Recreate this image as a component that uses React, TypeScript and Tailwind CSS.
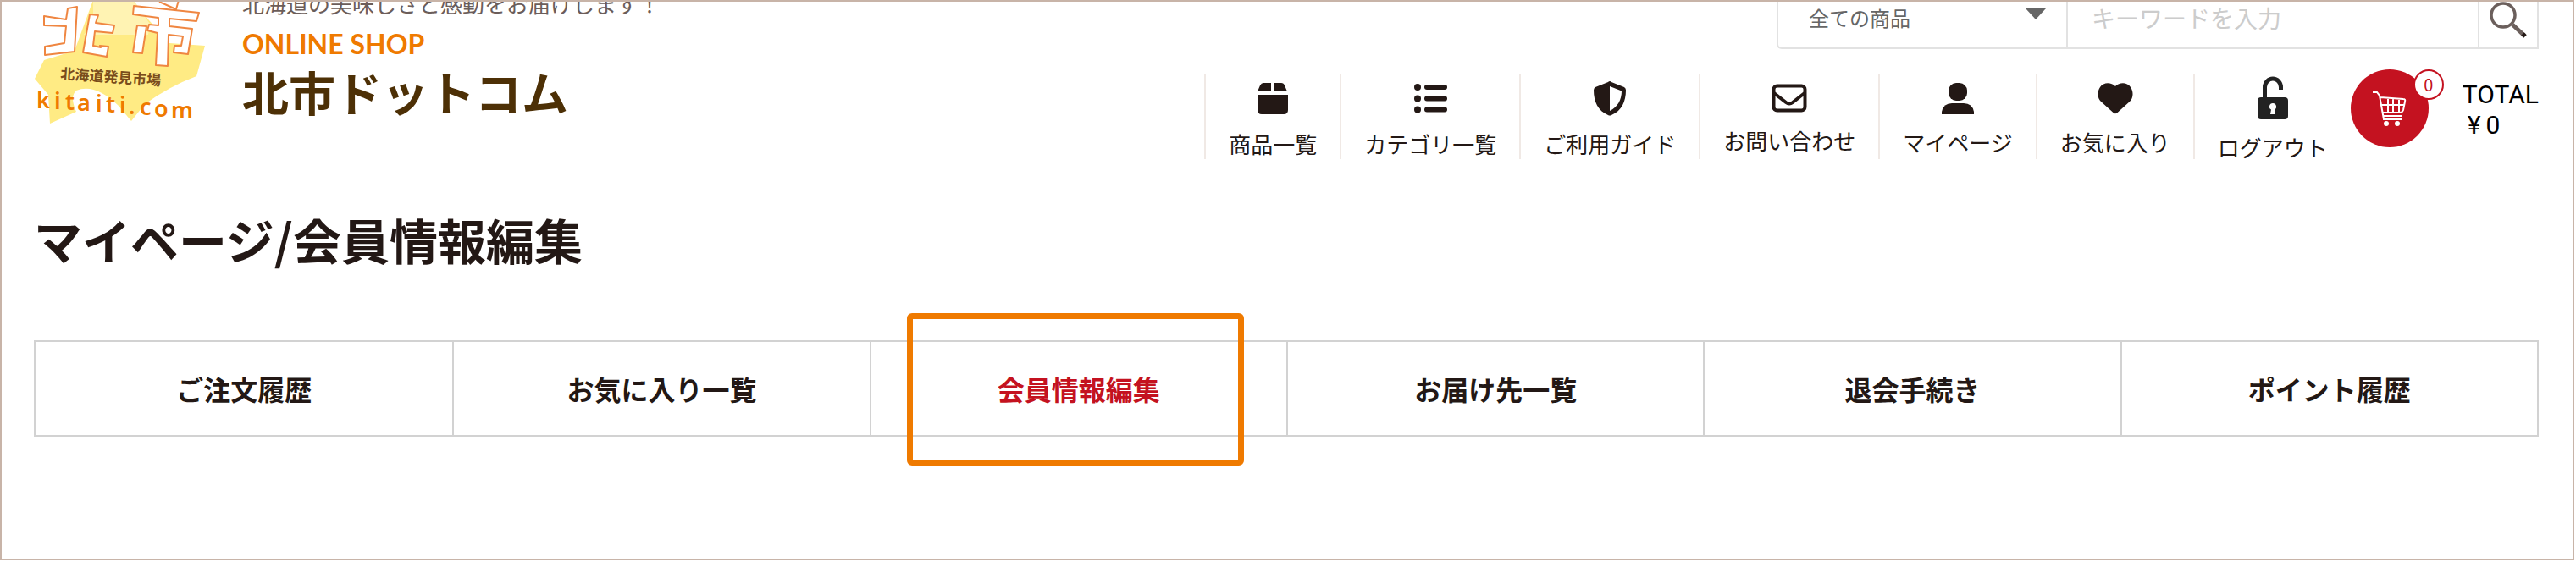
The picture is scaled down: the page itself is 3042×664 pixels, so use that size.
import type { ReactNode } from "react";

const navItems: { label: string; icon: ReactNode }[] = [
  {
    label: "商品一覧",
    icon: (
      <svg viewBox="0 0 36 40" className="h-10 w-9 shrink-0 fill-current">
        <path d="M7 0H16V10H0L3 3Q4.500 0 7 0ZM19 0H28Q31 0 32 3L35 10H19ZM0 14H36V32Q36 37 31 37H5Q0 37 0 32Z" />
      </svg>
    ),
  },
  {
    label: "カテゴリ一覧",
    icon: (
      <svg viewBox="0 0 40 40" className="size-10 shrink-0 fill-current">
        <circle cx="5" cy="5" r="4" />
        <circle cx="5" cy="18.500" r="4" />
        <circle cx="5" cy="31.500" r="4" />
        <rect x="13" y="2" width="27" height="6" rx="3" />
        <rect x="13" y="15.500" width="27" height="6" rx="3" />
        <rect x="13" y="28.500" width="27" height="6" rx="3" />
      </svg>
    ),
  },
  {
    label: "ご利用ガイド",
    icon: (
      <svg viewBox="0 0 40 40" className="size-10 shrink-0 overflow-visible fill-current">
        <path
          fillRule="evenodd"
          d="M20-2Q21-2 22-1L37 5Q39 6 39 8.500C39 22 34 33 22 38Q20 39 18 38C6 33 1 22 1 8.500Q1 6 3 5L18-1Q19-2 20-2ZM20 4V33C29 29 34 20 34 9.500Z"
        />
      </svg>
    ),
  },
  {
    label: "お問い合わせ",
    icon: (
      <svg viewBox="0 0 42 36" className="h-9 w-[42px] shrink-0 fill-none stroke-current">
        <rect x="2.500" y="3.500" width="37" height="29" rx="4" strokeWidth="4" />
        <path d="M3 12L17 23Q21 26 25 23L39 12" strokeWidth="4" />
      </svg>
    ),
  },
  {
    label: "マイページ",
    icon: (
      <svg viewBox="0 0 38 38" className="size-[38px] shrink-0 fill-current">
        <rect x="8" y="0" width="22" height="21" rx="9" />
        <path d="M0 37V34Q2 24 12 24H26Q36 24 38 34V37Z" />
      </svg>
    ),
  },
  {
    label: "お気に入り",
    icon: (
      <svg viewBox="0 0 42 38" className="h-[38px] w-[42px] shrink-0 fill-current">
        <path d="M21 4C26-1 35-1 39 5C43 11 42 18 38 22L23 35.500Q21 37 19 35.500L4 22C0 18-1 11 3 5C7-1 16-1 21 4Z" />
      </svg>
    ),
  },
  {
    label: "ログアウト",
    icon: (
      <svg viewBox="0 -7 36 52" className="-mt-2 h-[52px] w-9 shrink-0">
        <path d="M8.500 20V6A9.500 10 0 0 1 27.500 6V9" fill="none" stroke="#222" strokeWidth="5" />
        <rect x="0" y="18" width="36" height="26" rx="4" fill="#222" />
        <path d="M18 25A4 4 0 0 1 20 32.500L21 38H15L16 32.500A4 4 0 0 1 18 25Z" fill="#fff" />
      </svg>
    ),
  },
];

const tabs = [
  "ご注文履歴",
  "お気に入り一覧",
  "会員情報編集",
  "お届け先一覧",
  "退会手続き",
  "ポイント履歴",
];

function LogoMark() {
  return (
    <svg viewBox="0 2 210 150" className="h-[150px] w-[210px] shrink-0">
      <path d="M70 0H117L136 24L160 51L202 54L192 90Q160 102 131 123L115 143L100 125Q72 98 50 107Q42 114 50 132L19 146L17 112L1 93L12 71L48 60Z" fill="#ffeb84" />
      <path d="M70 0H117L137 28L135 41H59L70 28Z" fill="#fff3b3" />
      <g fill="#fff" stroke="#ef8641" strokeWidth="2" strokeLinejoin="round">
        <path d="M40 10L51 8L48 61L13 65V55L36 51L38 31L12 30V19L38 23Z" />
        <path d="M66 17L76 18L73 27L95 30L93 39L72 37L70 54L79 56L78 54L88 55L86 67L58 62Z" />
        <path d="M118 7L195 15L192 25L160 22V31L187 34L182 64L165 62L166 54L174 54L176 43L159 41L158 78L144 77L146 39L134 36L136 29L147 30V21L117 17Z" />
        <path d="M122 30L133 31L128 63L117 62Z" />
        <path d="M148 2L168 11L171 0" fill="none" />
      </g>
      <text x="31" y="93" transform="rotate(4 31 93)" fill="#7a4d1c" fontSize="17" fontWeight="700">
        北海道発見市場
      </text>
      <text
        x="3 24 37 51 73 85 101 112 125 142 162"
        y="128 129 130 131 132 133 134 135 136 138 140"
        fill="#ef7a00"
        fontSize="27"
        fontWeight="600"
        className="font-['Noto_Sans',sans-serif]"
      >
        kitaiti.com
      </text>
    </svg>
  );
}

function SearchForm() {
  return (
    <form className="flex h-14 w-[900px] rounded-bl-md border-2 border-t-0 border-[#e2e2e2] text-[#666]">
      <div className="relative w-[342px] border-r-2 border-[#e2e2e2]">
        <select aria-label="商品カテゴリ" className="h-[38px] w-full appearance-none bg-transparent pl-9 text-2xl">
          <option>全ての商品</option>
        </select>
        <svg viewBox="0 0 24 14" className="pointer-events-none absolute top-2 right-6 h-3.5 w-6">
          <path d="M0 0H24L12 13Z" fill="#666" />
        </svg>
      </div>
      <input
        type="text"
        aria-label="キーワード"
        placeholder="キーワードを入力"
        className="h-[38px] min-w-0 flex-1 pl-7 text-[28px] placeholder:text-[#ccc]"
      />
      <button type="button" aria-label="検索" className="flex w-[70px] border-l-2 border-[#e2e2e2] pl-3">
        <svg viewBox="0 0 44 46" className="h-[46px] w-11 fill-none stroke-[#6b5f5c]">
          <circle cx="16" cy="16" r="14" strokeWidth="3.500" />
          <path d="M27 27L41 40" strokeWidth="5" />
          <path d="M39 38L42 41" stroke="#231815" strokeWidth="5" />
        </svg>
      </button>
    </form>
  );
}

function Cart() {
  return (
    <a href="#cart" className="mt-6 flex items-start text-black">
      <span className="relative flex size-[92px] items-center justify-center rounded-full bg-[#c41220]">
        <svg viewBox="0 0 42 42" className="size-[42px] fill-none stroke-white">
          <path d="M1 2H6L9 6L14 34H36M10 8L37 10Q40 10 39 13L37 23Q36 26 33 26H13M11 17H38M19 9V26M25 9V26M32 10V26M13 30H35" strokeWidth="2" />
          <circle cx="17" cy="39" r="3" fill="#fff" stroke="none" />
          <circle cx="30" cy="39" r="3" fill="#fff" stroke="none" />
        </svg>
        <span className="absolute top-0 -right-[18px] flex size-9 items-center justify-center rounded-full border-2 border-[#c41220] bg-white text-xl text-[#c41220]">
          0
        </span>
      </span>
      <span className="mt-3 ml-10 flex flex-col font-['Roboto',sans-serif] text-[30px] leading-9">
        <span>TOTAL</span>
        <span className="flex gap-1.5 pl-1.5">
          <span>¥</span>
          <span>0</span>
        </span>
      </span>
    </a>
  );
}

export default function App() {
  return (
    <div className="mr-0.5 min-h-[calc(100vh-2px)] overflow-hidden border-2 border-[#c8b4a8] bg-white font-['Noto_Sans_CJK_JP',sans-serif] text-[#231815]">
      <header className="flex items-start justify-between pr-10 pl-[38px]">
        <div className="flex">
          <LogoMark />
          <div className="-mt-4 pl-9">
            <p className="text-[26px] leading-9 text-[#6b5d5a]">
              北海道の美味しさと感動をお届けします！
            </p>
            <p className="mt-2.5 font-['Lato',sans-serif] text-[32px] leading-10 font-bold text-[#ef7a00]">
              ONLINE SHOP
            </p>
            <p className="mt-1 text-[55px] leading-[62px] font-bold text-[#4d3006]">
              北市ドットコム
            </p>
          </div>
        </div>

        <div className="flex flex-col items-end">
          <SearchForm />
          <div className="flex items-start">
            <nav className="mt-[30px] flex">
              {navItems.map((item) => (
                <a
                  key={item.label}
                  href="#menu"
                  className="flex h-[100px] flex-col items-center border-l-2 border-[#f0e9e5] px-[27px] pt-2.5 text-[26px] leading-7"
                >
                  {item.icon}
                  <span className="mt-[18px]">{item.label}</span>
                </a>
              ))}
            </nav>
            <Cart />
          </div>
        </div>
      </header>

      <main className="pr-10 pl-[38px]">
        <h1 className="mt-[54px] text-[57px] leading-[80px] font-bold">
          マイページ/会員情報編集
        </h1>
        <nav className="mt-20 grid grid-cols-6 border-2 border-[#d2d2d2]">
          {tabs.map((tab) => (
            <a
              key={tab}
              href="#tab"
              aria-current={tab === "会員情報編集" ? "page" : undefined}
              className="relative flex h-[110px] items-center justify-center border-l-2 border-[#d2d2d2] text-[32px] font-bold first:border-l-0 aria-[current=page]:text-[#c41220]"
            >
              {tab}
              {tab === "会員情報編集" && (
                <span className="absolute -top-[34px] right-[50px] -bottom-9 left-[42px] rounded-md border-[7px] border-[#ef7a00]" />
              )}
            </a>
          ))}
        </nav>
      </main>
    </div>
  );
}
